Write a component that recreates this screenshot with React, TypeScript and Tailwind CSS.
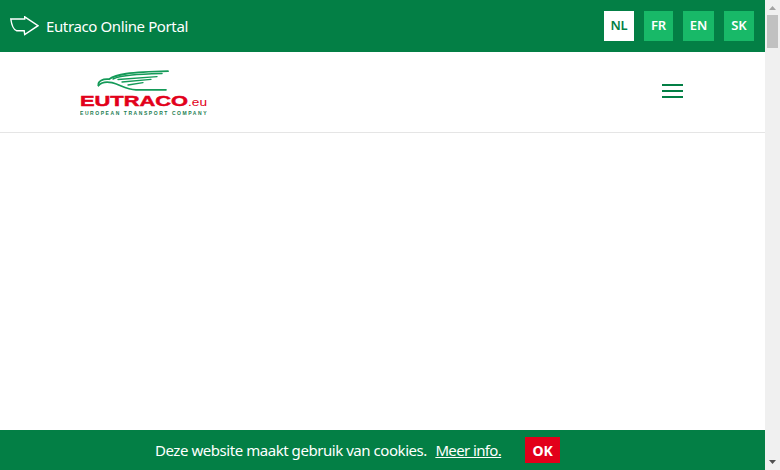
export default function App() {
  return (
    <div className="flex h-[470px] w-[780px] overflow-hidden bg-white font-['Noto_Sans',sans-serif]">
      <div className="flex w-[765px] flex-col">
        <header className="flex h-[52px] items-center bg-[#037f45] pl-[10px] pr-[11px]">
          <svg width="29" height="20" viewBox="0 0 29 20" fill="none" stroke="#fff" strokeWidth="1.4" strokeLinejoin="miter">
            <path d="M0.8 3 H14.7 V0.8 L28 9.7 L14.7 18.5 L14.2 14.7 H6.5 C3 13.5 1.5 8 0.8 3 Z" />
          </svg>
          <span className="ml-[7px] text-[15px] leading-none tracking-[-0.38px] text-white">Eutraco Online Portal</span>
          <div className="ml-auto flex h-[30px] text-[13px] font-semibold tracking-[-0.1px]">
            <span className="flex w-[30px] items-center justify-center bg-white text-[#037f45]">NL</span>
            <span className="ml-[10px] flex w-[29px] items-center justify-center bg-[#18b968] text-white">FR</span>
            <span className="ml-[10px] flex w-[31px] items-center justify-center bg-[#18b968] text-white">EN</span>
            <span className="ml-[10px] flex w-[30px] items-center justify-center bg-[#18b968] text-white">SK</span>
          </div>
        </header>
        <nav className="flex h-[81px] items-center border-b border-[#e5e5e5] pl-[80px] pr-[82px]">
          <svg width="128" height="46" viewBox="0 0 128 46" className="mt-[2px]">
            <g fill="none" stroke="#149a58" strokeLinecap="round">
              <path d="M18.5 15.5 C17.5 11 23 8.6 29 9.2 C36 4.5 48 2 88 1.2" strokeWidth="1.8" />
              <path d="M18.5 15.5 C22 11.5 27 11.6 32 12.6 C40 14.5 46 19.6 56 19.8 H86" strokeWidth="1.7" />
              <path d="M33 9 C42 5 58 4.4 82 3.6" strokeWidth="1.5" />
              <path d="M38 9.5 L77 6.6" strokeWidth="1.4" />
              <path d="M42 12 L71 9.4" strokeWidth="1.3" />
              <path d="M48 15 L63 12.6" strokeWidth="1.3" />
            </g>
            <text x="0" y="36" fill="#e2001a" fontSize="15.5" fontWeight="700" stroke="#e2001a" strokeWidth="0.5" textLength="108" lengthAdjust="spacingAndGlyphs" fontFamily="'Liberation Sans', sans-serif">EUTRACO</text>
            <text x="108" y="36" fill="#e2001a" fontSize="10" textLength="19" lengthAdjust="spacingAndGlyphs" fontFamily="'Liberation Sans', sans-serif">.eu</text>
            <text x="0" y="44.5" fill="#1c7d52" fontSize="5" fontWeight="700" textLength="126.5" fontFamily="'Liberation Sans', sans-serif">EUROPEAN TRANSPORT COMPANY</text>
          </svg>
          <div className="ml-auto mt-[-2px] flex w-[21px] flex-col gap-[4px]">
            <span className="h-[2px] bg-[#037f45]" />
            <span className="h-[2px] bg-[#037f45]" />
            <span className="h-[2px] bg-[#037f45]" />
          </div>
        </nav>
        <main className="flex-1" />
        <footer className="flex h-[40px] items-center bg-[#037f45] pl-[155px] text-[15px] text-white">
          <span className="tracking-[-0.45px]">Deze website maakt gebruik van cookies.</span>
          <span className="ml-[8.5px] tracking-[-0.62px] underline">Meer info.</span>
          <span className="ml-[24px] flex h-[26px] w-[35px] items-center justify-center bg-[#e2001a] text-[14px] font-bold">OK</span>
        </footer>
      </div>
      <aside className="flex w-[15px] flex-col items-center bg-[#f0f0f0]">
        <svg width="15" height="15" viewBox="0 0 15 15" className="shrink-0"><path d="M4 10 L7.5 6 L11 10 Z" fill="#a3a3a3" /></svg>
        <div className="h-[33px] w-[11px] bg-[#c1c1c1]" />
        <div className="flex-1" />
        <svg width="15" height="15" viewBox="0 0 15 15" className="shrink-0"><path d="M4 5 L11 5 L7.5 9 Z" fill="#505050" /></svg>
      </aside>
    </div>
  );
}
